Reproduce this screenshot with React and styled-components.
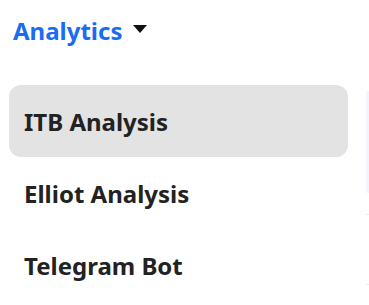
import React from "react";
import styled, { createGlobalStyle } from "styled-components";

const GlobalStyle = createGlobalStyle`
  html, body {
    margin: 0;
    padding: 0;
    background: #ffffff;
  }
  body {
    font-family: "Noto Sans", "Open Sans", sans-serif;
  }
`;

const Page = styled.div`
  width: 369px;
  height: 305px;
  display: flex;
  overflow: hidden;
`;

const Sidebar = styled.nav`
  width: 339px;
  padding: 13px 0 0 9px;
  display: flex;
  flex-direction: column;
`;

const SectionHeader = styled.button`
  display: flex;
  align-items: center;
  gap: 11px;
  padding: 0 0 0 4px;
  border: none;
  background: none;
  font-family: inherit;
  font-size: 24px;
  font-weight: 700;
  color: #1a6cf5;
  cursor: pointer;
  height: 34px;
`;

const Caret = styled.span`
  width: 0;
  height: 0;
  border-left: 7.5px solid transparent;
  border-right: 7.5px solid transparent;
  border-top: 8px solid #111;
  margin-top: -2px;
`;

const MenuList = styled.ul`
  list-style: none;
  margin: 38px 0 0;
  padding: 0;
`;

const MenuItem = styled.li`
  height: 72px;
  display: flex;
  align-items: center;
  padding-left: 15px;
  border-radius: 12px;
  background: ${({ $active }) => ($active ? "#e3e3e3" : "transparent")};
  font-size: 24px;
  font-weight: 700;
  color: #222;
  cursor: pointer;
`;

const EdgePanel = styled.div`
  flex: 1;
  display: flex;
  flex-direction: column;
  padding-top: 91px;
  margin-left: 18px;
`;

const EdgeStrip = styled.div`
  height: 102px;
  background: #f3f4fc;
`;

const EdgeLine = styled.div`
  height: 1px;
  background: #ececf2;
  margin-top: ${({ $gap }) => $gap}px;
`;

const items = ["ITB Analysis", "Elliot Analysis", "Telegram Bot"];

export default function App() {
  return (
    <>
      <GlobalStyle />
      <Page>
        <Sidebar>
          <SectionHeader>
            Analytics
            <Caret />
          </SectionHeader>
          <MenuList>
            {items.map((label, i) => (
              <MenuItem key={label} $active={i === 0}>
                {label}
              </MenuItem>
            ))}
          </MenuList>
        </Sidebar>
        <EdgePanel>
          <EdgeStrip />
          <EdgeLine $gap={21} />
          <EdgeLine $gap={69} />
        </EdgePanel>
      </Page>
    </>
  );
}
